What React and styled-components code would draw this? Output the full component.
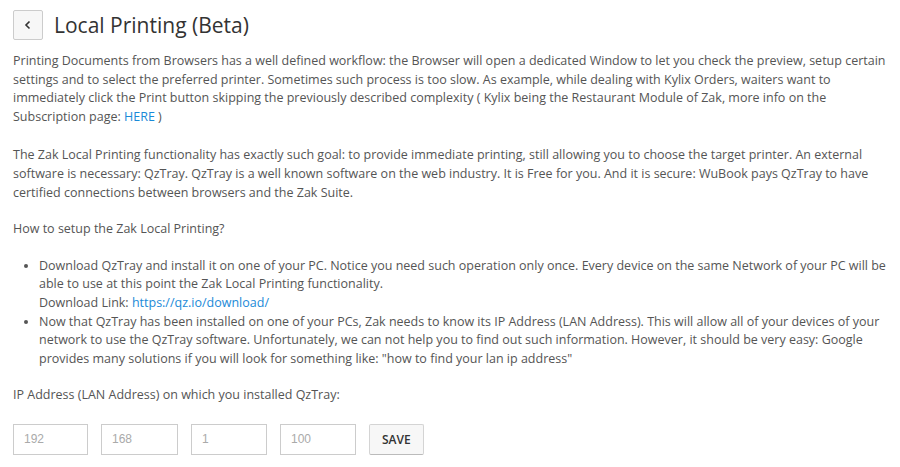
import React from "react";
import styled, { createGlobalStyle } from "styled-components";

const Global = createGlobalStyle`
  body {
    margin: 0;
    background: #fff;
    font-family: "Open Sans", "Liberation Sans", sans-serif;
    font-size: 12.5px;
    line-height: 18.6px;
    color: #555;
  }
`;

const Page = styled.div`
  padding: 10px 13px 0 13px;
`;

const Header = styled.div`
  display: flex;
  align-items: center;
  gap: 11px;
  margin-bottom: 12px;
`;

const BackButton = styled.button`
  width: 30px;
  height: 30px;
  padding: 0;
  display: flex;
  align-items: center;
  justify-content: center;
  background: #f7f7f7;
  border: 1px solid #ccc;
  border-radius: 2px;
  color: #333;
  cursor: pointer;
`;

const Title = styled.h1`
  margin: 0;
  font-size: 21px;
  font-weight: 400;
  color: #333;
  line-height: 30px;
`;

const Text = styled.p`
  margin: 0 0 ${(p) => p.$gap || 20}px 0;
`;

const Link = styled.a`
  color: #1a8ad8;
  text-decoration: none;
`;

const List = styled.ul`
  margin: 0 0 18px 0;
  padding-left: 26px;
  li {
    margin: 0;
  }
`;

const Fields = styled.div`
  display: flex;
  gap: 13px;
  margin-top: 19px;
`;

const IpInput = styled.input`
  width: ${(p) => p.$w || 76}px;
  height: 31px;
  box-sizing: border-box;
  border: 1px solid #ccc;
  border-radius: 0;
  padding: 0 10px;
  font-family: "Liberation Sans", "Open Sans", sans-serif;
  font-size: 12px;
  color: #555;
  &::placeholder {
    color: #aaa;
  }
`;

const SaveButton = styled.button`
  height: 31px;
  padding: 0 12px;
  background: #f7f7f7;
  border: 1px solid #d4d4d4;
  border-bottom-color: #bbb;
  border-radius: 2px;
  font-family: "Open Sans", sans-serif;
  font-size: 12px;
  font-weight: 600;
  color: #333;
  cursor: pointer;
`;

const Chevron = () => (
  <svg width="10" height="10" viewBox="0 0 10 10">
    <path d="M6.5 1.5 L3 5 L6.5 8.5" fill="none" stroke="#333" strokeWidth="1.6" />
  </svg>
);

export default function App() {
  return (
    <Page>
      <Global />
      <Header>
        <BackButton>
          <Chevron />
        </BackButton>
        <Title>Local Printing (Beta)</Title>
      </Header>
      <Text>
        Printing Documents from Browsers has a well defined workflow: the Browser will open a dedicated Window to let you check the preview, setup certain settings and to select the preferred printer. Sometimes such process is too slow. As example, while dealing with Kylix Orders, waiters want to immediately click the Print button skipping the previously described complexity ( Kylix being the Restaurant Module of Zak, more info on the Subscription page: <Link href="#">HERE</Link> )
      </Text>
      <Text $gap={18}>
        The Zak Local Printing functionality has exactly such goal: to provide immediate printing, still allowing you to choose the target printer. An external software is necessary: QzTray. QzTray is a well known software on the web industry. It is Free for you. And it is secure: WuBook pays QzTray to have certified connections between browsers and the Zak Suite.
      </Text>
      <Text $gap={18}>How to setup the Zak Local Printing?</Text>
      <List>
        <li>
          Download QzTray and install it on one of your PC. Notice you need such operation only once. Every device on the same Network of your PC will be able to use at this point the Zak Local Printing functionality.
          <br />
          Download Link: <Link href="#">https://qz.io/download/</Link>
        </li>
        <li>
          Now that QzTray has been installed on one of your PCs, Zak needs to know its IP Address (LAN Address). This will allow all of your devices of your network to use the QzTray software. Unfortunately, we can not help you to find out such information. However, it should be very easy: Google provides many solutions if you will look for something like: "how to find your lan ip address"
        </li>
      </List>
      <div>IP Address (LAN Address) on which you installed QzTray:</div>
      <Fields>
        <IpInput placeholder="192" $w={75} />
        <IpInput placeholder="168" $w={77} />
        <IpInput placeholder="1" />
        <IpInput placeholder="100" />
        <SaveButton>SAVE</SaveButton>
      </Fields>
    </Page>
  );
}
